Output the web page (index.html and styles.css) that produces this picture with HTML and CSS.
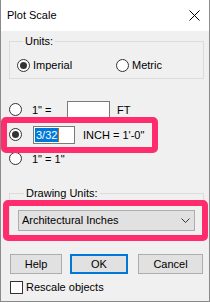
FILE: index.html
```html
<!DOCTYPE html>
<html>
<head>
<meta charset="utf-8">
<title>Plot Scale</title>
<link rel="stylesheet" href="styles.css">
</head>
<body>
<div class="window">
  <div class="titlebar">
    <span class="title">Plot Scale</span>
    <svg class="close" width="11" height="11" viewBox="0 0 11 11"><path d="M0.5 0.5 L10.5 10.5 M10.5 0.5 L0.5 10.5" stroke="#000" stroke-width="1" fill="none"/></svg>
  </div>
  <div class="content">
    <fieldset class="group units">
      <legend class="legend">Units:</legend>
      <div class="opts">
        <label class="opt opt-first"><span class="radio checked"></span>Imperial</label>
        <label class="opt"><span class="radio"></span>Metric</label>
      </div>
    </fieldset>

    <div class="scales">
      <div class="srow">
        <span class="radio"></span>
        <span class="stext">1" =</span>
        <span class="field f1"></span>
        <span class="unit">FT</span>
      </div>
      <div class="srow r2">
        <span class="radio checked"></span>
        <span class="field f2"><span class="sel">3/32</span><span class="caret"></span></span>
        <span class="unit u2">INCH = 1'-0"</span>
      </div>
      <div class="srow">
        <span class="radio"></span>
        <span class="stext">1" = 1"</span>
      </div>
    </div>

    <fieldset class="group dunits">
      <legend class="legend">Drawing Units:</legend>
      <div class="combo">
        <span class="combo-text">Architectural Inches</span>
        <svg class="chev" width="9" height="5" viewBox="0 0 9 5"><path d="M0.5 0.5 L4.5 4.5 L8.5 0.5" stroke="#333" stroke-width="1" fill="none"/></svg>
      </div>
    </fieldset>

    <div class="buttons">
      <span class="btn b-help">Help</span>
      <span class="btn b-ok">OK</span>
      <span class="btn b-cancel">Cancel</span>
    </div>

    <label class="check"><span class="box"></span>Rescale objects</label>
  </div>
  <div class="mark m1"></div>
  <div class="mark m2"></div>
</div>
</body>
</html>
```

FILE: styles.css
```css
html, body {
  margin: 0;
  padding: 0;
  background: #ffffff;
}
body {
  font-family: "Liberation Sans", Arial, sans-serif;
  font-size: 11px;
  line-height: 13px;
  color: #000;
}
.window {
  position: relative;
  width: 210px;
  height: 302px;
  box-sizing: border-box;
  border: 1px solid #8a8a8a;
  border-top: none;
  background: #f0f0f0;
  overflow: hidden;
}
.titlebar {
  height: 31px;
  background: #ffffff;
  display: flex;
  align-items: center;
  justify-content: space-between;
  padding: 0 9px 0 6px;
}
.title {
  font-size: 11px;
}
.close {
  display: block;
  margin-top: 0;
}
.content {
  padding: 0 5px 0 8px;
}
.group {
  margin: 0;
  border: 1px solid #dcdcdc;
  min-width: 0;
}
.legend {
  padding: 0 2px;
  margin-left: 6px;
  line-height: 13px;
}
.units {
  margin-top: 4px;
  padding: 10px 0 5px 7px;
}
.opts {
  display: flex;
  height: 15px;
  align-items: center;
}
.opt {
  display: flex;
  align-items: center;
}
.opt-first {
  width: 99px;
}
.radio {
  box-sizing: border-box;
  width: 13px;
  height: 13px;
  border: 1px solid #333;
  border-radius: 50%;
  background: #fff;
  display: flex;
  align-items: center;
  justify-content: center;
  margin-right: 3px;
  flex: none;
}
.radio.checked::after {
  content: "";
  width: 7px;
  height: 7px;
  border-radius: 50%;
  background: #333;
}
.scales {
  margin-top: 22px;
  display: flex;
  flex-direction: column;
  gap: 6px;
}
.srow {
  height: 18px;
  display: flex;
  align-items: center;
}
.srow .radio {
  margin-right: 10px;
  margin-bottom: 2px;
}
.r2 {
  margin-top: 1px;
}
.stext {
  width: 35px;
}
.field {
  box-sizing: border-box;
  height: 18px;
  border: 1px solid #7a7a7a;
  background: #fff;
  display: flex;
  align-items: center;
}
.f1 {
  width: 43px;
}
.f2 {
  width: 42px;
  margin-left: 1px;
  padding-left: 1px;
}
.sel {
  background: #0078d7;
  color: #fff;
  padding: 0 1px;
  line-height: 14px;
}
.caret {
  width: 1px;
  height: 14px;
  background: #c06a1c;
}
.unit {
  margin-left: 7px;
}
.u2 {
  margin-left: 8px;
}
.dunits {
  margin-top: 19px;
  padding: 10px 8px 6px 8px;
}
.combo {
  box-sizing: border-box;
  height: 21px;
  border: 1px solid #adadad;
  background: #e1e1e1;
  display: flex;
  align-items: center;
  justify-content: space-between;
  padding: 0 4px 0 3px;
}
.chev {
  display: block;
}
.buttons {
  margin-top: 16px;
  margin-left: 1px;
  display: flex;
  height: 20px;
}
.btn {
  box-sizing: border-box;
  height: 20px;
  border: 1px solid #adadad;
  background: #e1e1e1;
  display: flex;
  align-items: center;
  justify-content: center;
}
.b-help {
  width: 52px;
}
.b-ok {
  width: 58px;
  margin-left: 8px;
  border: 2px solid #0078d7;
}
.b-cancel {
  width: 65px;
  margin-left: 10px;
}
.check {
  margin-top: 7px;
  margin-left: 1px;
  display: flex;
  align-items: center;
  height: 13px;
}
.box {
  box-sizing: border-box;
  width: 13px;
  height: 13px;
  border: 1px solid #333;
  background: #fff;
  margin-right: 3px;
}
.mark {
  position: absolute;
  box-sizing: border-box;
  border: 6px solid #ff2d6e;
  border-radius: 5px;
}
.m1 {
  left: 0px;
  top: 117px;
  width: 157px;
  height: 36px;
}
.m2 {
  left: 2px;
  top: 200px;
  width: 205px;
  height: 41px;
}
```
